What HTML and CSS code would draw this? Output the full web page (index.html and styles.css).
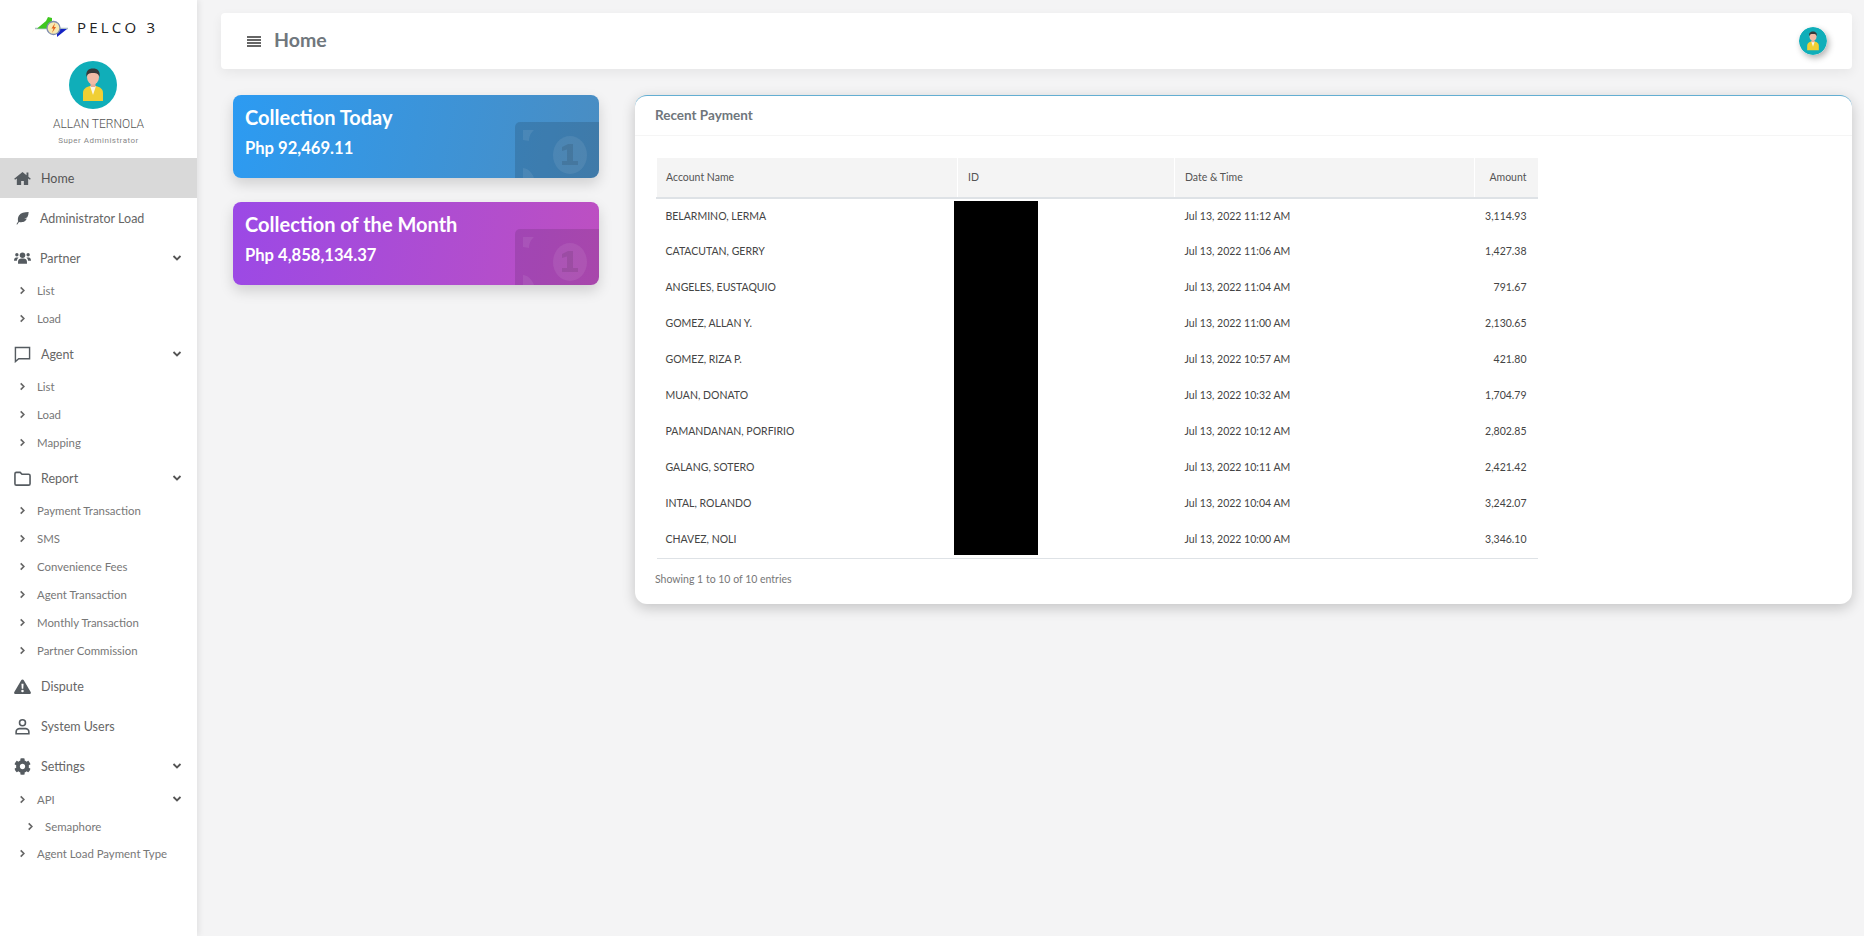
FILE: index.html
```html
<!DOCTYPE html>
<html lang="en">
<head>
  <meta charset="UTF-8">
  <meta name="viewport" content="width=device-width, initial-scale=1.0">
  <title>PELCO 3 - Home</title>
  <link rel="stylesheet" href="styles.css">
</head>
<body>
  <svg class="defs" aria-hidden="true">
    <symbol id="avatar" viewBox="0 0 48 48">
      <circle cx="24" cy="24" r="24" fill="#10aeb9"/>
      <path d="M14 40v-8c0-4 3-6 7-7h6c4 1 7 3 7 7v8z" fill="#f0cf34"/>
      <path d="M21 25l3 9 3-9z" fill="#fbf6e6"/>
      <rect x="21.5" y="20" width="5" height="6" fill="#e8ad97"/>
      <ellipse cx="24" cy="16" rx="6" ry="7.5" fill="#f2bba6"/>
      <path d="M17.5 16c-1-6 2-8.500 6.500-8.500s7.500 2.500 6.500 8.500c-1-3-2-4-6.500-4s-5.500 1-6.500 4z" fill="#37393a"/>
    </symbol>
    <symbol id="chevron-down" viewBox="0 0 10 10">
      <path d="M1.500 3l3.500 3.500L8.500 3" fill="none" stroke="currentColor" stroke-width="1.800"/>
    </symbol>
    <symbol id="chevron-right" viewBox="0 0 10 10">
      <path d="M3 1.500L6.500 5 3 8.500" fill="none" stroke="currentColor" stroke-width="1.800"/>
    </symbol>
  </svg>

  <div class="layout">
    <aside class="sidebar">
      <div class="brand">
        <svg class="brand-logo" viewBox="0 0 34 20">
          <path d="M0 11.500h33" stroke="#a9bcc4" stroke-width="1.500"/>
          <path d="M2 11.500L11 4l2-4 4 1v10.500z" fill="#3fc71f"/>
          <path d="M20 12h12L22 20v-3h-2z" fill="#1422c4"/>
          <circle cx="18.500" cy="11" r="6.500" fill="#f7e9b0" stroke="#7f8db0" stroke-width="1.300"/>
          <path d="M20 6l-3.500 5.500h2L17 16l4-6h-2z" fill="#e2631c"/>
        </svg>
        <span class="brand-name">PELCO 3</span>
      </div>
      <div class="profile">
        <svg class="profile-pic"><use href="#avatar"/></svg>
        <div class="profile-name">ALLAN TERNOLA</div>
        <div class="profile-role">Super Administrator</div>
      </div>

      <nav>
        <a class="nav-item active">
          <svg class="nav-icon" viewBox="0 0 576 512"><path d="M288 36L6 268l30 34 60-50v228h146V340h92v140h146V252l60 50 30-34-82-68V50h-64v96z"/></svg>
          Home
        </a>
        <a class="nav-item">
          <svg class="nav-icon small" viewBox="0 0 16 16"><path d="M15 1c-5 0-9 1-11 4-1.500 2-1.500 5-1 7L1 15l1 .5 2-3c2 .5 5 .5 7-1 1-1 1.500-2 2-3l-3 .5 3.500-2C14.500 5 15 3 15 1z"/></svg>
          Administrator Load
        </a>
        <a class="nav-item">
          <svg class="nav-icon small" viewBox="0 0 16 13"><circle cx="8" cy="4" r="2.600"/><circle cx="2.700" cy="3.500" r="1.600"/><circle cx="13.300" cy="3.500" r="1.600"/><path d="M3.800 12v-2c0-2 1.500-3 3-3h2.400c1.500 0 3 1 3 3v2zM0 9c0-2 1-3 2-3h1.500c.3 0 .6.100.8.300C3.400 7 2.800 8 2.700 9zM16 9c0-2-1-3-2-3h-1.500c-.3 0-.6.100-.8.300.9.700 1.500 1.700 1.600 2.700z"/></svg>
          Partner
          <svg class="nav-arrow"><use href="#chevron-down"/></svg>
        </a>
        <div class="submenu">
          <a class="sub-item"><svg class="sub-arrow"><use href="#chevron-right"/></svg>List</a>
          <a class="sub-item"><svg class="sub-arrow"><use href="#chevron-right"/></svg>Load</a>
        </div>
        <a class="nav-item">
          <svg class="nav-icon" viewBox="0 0 18 18"><path d="M1.500 1.500h15v12H5L1.500 16.500z" fill="none" stroke="currentColor" stroke-width="1.500"/></svg>
          Agent
          <svg class="nav-arrow"><use href="#chevron-down"/></svg>
        </a>
        <div class="submenu">
          <a class="sub-item"><svg class="sub-arrow"><use href="#chevron-right"/></svg>List</a>
          <a class="sub-item"><svg class="sub-arrow"><use href="#chevron-right"/></svg>Load</a>
          <a class="sub-item"><svg class="sub-arrow"><use href="#chevron-right"/></svg>Mapping</a>
        </div>
        <a class="nav-item">
          <svg class="nav-icon" viewBox="0 0 18 16"><path d="M1 3a1.500 1.500 0 0 1 1.500-1.500h4L8.500 3.500h7A1.500 1.500 0 0 1 17 5v8.500a1.500 1.500 0 0 1-1.500 1.500h-13A1.500 1.500 0 0 1 1 13.500z" fill="none" stroke="currentColor" stroke-width="1.700"/></svg>
          Report
          <svg class="nav-arrow"><use href="#chevron-down"/></svg>
        </a>
        <div class="submenu">
          <a class="sub-item"><svg class="sub-arrow"><use href="#chevron-right"/></svg>Payment Transaction</a>
          <a class="sub-item"><svg class="sub-arrow"><use href="#chevron-right"/></svg>SMS</a>
          <a class="sub-item"><svg class="sub-arrow"><use href="#chevron-right"/></svg>Convenience Fees</a>
          <a class="sub-item"><svg class="sub-arrow"><use href="#chevron-right"/></svg>Agent Transaction</a>
          <a class="sub-item"><svg class="sub-arrow"><use href="#chevron-right"/></svg>Monthly Transaction</a>
          <a class="sub-item"><svg class="sub-arrow"><use href="#chevron-right"/></svg>Partner Commission</a>
        </div>
        <a class="nav-item">
          <svg class="nav-icon" viewBox="0 0 16 14"><path fill-rule="evenodd" d="M8 .5c.5 0 1 .3 1.200.7l6.500 11c.5.8-.1 1.800-1.100 1.800H1.400c-1 0-1.600-1-1.100-1.800l6.500-11C7 .8 7.500.5 8 .5zM7 4.500l.3 4.500h1.400L9 4.500zM8 10a1.200 1.200 0 1 0 0 2.400A1.200 1.200 0 0 0 8 10z"/></svg>
          Dispute
        </a>
        <a class="nav-item">
          <svg class="nav-icon" viewBox="0 0 16 16"><circle cx="8" cy="4.500" r="2.800" fill="none" stroke="currentColor" stroke-width="1.500"/><path d="M2 14.800v-1.800c0-2 2-3 3-3h6c1 0 3 1 3 3v1.800z" fill="none" stroke="currentColor" stroke-width="1.500"/></svg>
          System Users
        </a>
        <a class="nav-item">
          <svg class="nav-icon" viewBox="0 0 512 512"><path d="M487.4 315.7l-42.6-24.6c4.300-23.200 4.300-47 0-70.200l42.6-24.600c4.900-2.800 7.100-8.600 5.500-14-11.100-35.600-30-67.800-54.700-94.600-3.800-4.100-10-5.100-14.800-2.300L380.800 110c-17.900-15.400-38.500-27.300-60.800-35.100V25.800c0-5.600-3.900-10.500-9.400-11.700-36.700-8.200-74.300-7.800-109.200 0-5.500 1.200-9.400 6.100-9.400 11.700V75c-22.200 7.900-42.800 19.800-60.800 35.100L88.700 85.500c-4.900-2.800-11-1.900-14.800 2.300-24.700 26.700-43.600 58.900-54.700 94.600-1.700 5.400.6 11.200 5.500 14L67.300 221c-4.300 23.200-4.300 47 0 70.200l-42.600 24.600c-4.900 2.800-7.100 8.600-5.500 14 11.100 35.600 30 67.800 54.700 94.600 3.800 4.100 10 5.100 14.800 2.300l42.600-24.600c17.900 15.400 38.500 27.300 60.800 35.100v49.200c0 5.600 3.900 10.500 9.400 11.700 36.700 8.200 74.300 7.800 109.200 0 5.500-1.200 9.400-6.100 9.400-11.700v-49.200c22.200-7.900 42.800-19.800 60.800-35.100l42.600 24.600c4.900 2.800 11 1.900 14.800-2.300 24.700-26.700 43.600-58.900 54.700-94.600 1.500-5.500-.7-11.300-5.600-14.100zM256 336c-44.100 0-80-35.900-80-80s35.900-80 80-80 80 35.900 80 80-35.900 80-80 80z"/></svg>
          Settings
          <svg class="nav-arrow"><use href="#chevron-down"/></svg>
        </a>
        <div class="submenu">
          <a class="sub-item sub-api"><svg class="sub-arrow"><use href="#chevron-right"/></svg>API<svg class="nav-arrow"><use href="#chevron-down"/></svg></a>
          <a class="sub-item sub-nested"><svg class="sub-arrow"><use href="#chevron-right"/></svg>Semaphore</a>
          <a class="sub-item"><svg class="sub-arrow"><use href="#chevron-right"/></svg>Agent Load Payment Type</a>
        </div>
      </nav>
    </aside>

    <main class="main">
      <header class="topbar">
        <div class="menu-toggle"><span></span><span></span><span></span><span></span></div>
        <h1 class="page-title">Home</h1>
        <svg class="topbar-user"><use href="#avatar"/></svg>
      </header>

      <div class="content">
        <div class="stats">
          <div class="stat-card blue">
            <div class="stat-title">Collection Today</div>
            <div class="stat-value">Php 92,469.11</div>
            <svg class="stat-bill" viewBox="0 0 84 56">
              <rect width="100" height="72" rx="5" fill="#000" fill-opacity=".13"/>
              <path d="M8 8h11c-2 2-5 5-5 11l-6-1zM8 46c4 0 9 4 11 10H8z" fill="#fff" fill-opacity=".08"/>
              <ellipse cx="55" cy="33" rx="17" ry="19" fill="#fff" fill-opacity=".08"/>
              <path d="M47 43h16v-4h-5V22h-5l-6 3v4l5-1.500V39h-5z" fill="#000" fill-opacity=".1"/>
            </svg>
          </div>
          <div class="stat-card purple">
            <div class="stat-title">Collection of the Month</div>
            <div class="stat-value">Php 4,858,134.37</div>
            <svg class="stat-bill" viewBox="0 0 84 56">
              <rect width="100" height="72" rx="5" fill="#000" fill-opacity=".11"/>
              <path d="M8 8h11c-2 2-5 5-5 11l-6-1zM8 46c4 0 9 4 11 10H8z" fill="#fff" fill-opacity=".08"/>
              <ellipse cx="55" cy="33" rx="17" ry="19" fill="#fff" fill-opacity=".08"/>
              <path d="M47 43h16v-4h-5V22h-5l-6 3v4l5-1.500V39h-5z" fill="#000" fill-opacity=".09"/>
            </svg>
          </div>
        </div>

        <section class="panel">
          <div class="panel-header">Recent Payment</div>
          <div class="panel-body">
            <div class="table-wrap">
              <table class="payments">
                <thead>
                  <tr>
                    <th class="col-name">Account Name</th>
                    <th class="col-id">ID</th>
                    <th class="col-date">Date &amp; Time</th>
                    <th class="col-amount">Amount</th>
                  </tr>
                </thead>
                <tbody>
                  <tr><td>BELARMINO, LERMA</td><td></td><td>Jul 13, 2022 11:12 AM</td><td class="num">3,114.93</td></tr>
                  <tr><td>CATACUTAN, GERRY</td><td></td><td>Jul 13, 2022 11:06 AM</td><td class="num">1,427.38</td></tr>
                  <tr><td>ANGELES, EUSTAQUIO</td><td></td><td>Jul 13, 2022 11:04 AM</td><td class="num">791.67</td></tr>
                  <tr><td>GOMEZ, ALLAN Y.</td><td></td><td>Jul 13, 2022 11:00 AM</td><td class="num">2,130.65</td></tr>
                  <tr><td>GOMEZ, RIZA P.</td><td></td><td>Jul 13, 2022 10:57 AM</td><td class="num">421.80</td></tr>
                  <tr><td>MUAN, DONATO</td><td></td><td>Jul 13, 2022 10:32 AM</td><td class="num">1,704.79</td></tr>
                  <tr><td>PAMANDANAN, PORFIRIO</td><td></td><td>Jul 13, 2022 10:12 AM</td><td class="num">2,802.85</td></tr>
                  <tr><td>GALANG, SOTERO</td><td></td><td>Jul 13, 2022 10:11 AM</td><td class="num">2,421.42</td></tr>
                  <tr><td>INTAL, ROLANDO</td><td></td><td>Jul 13, 2022 10:04 AM</td><td class="num">3,242.07</td></tr>
                  <tr><td>CHAVEZ, NOLI</td><td></td><td>Jul 13, 2022 10:00 AM</td><td class="num">3,346.10</td></tr>
                </tbody>
              </table>
              <div class="redaction"></div>
            </div>
            <div class="table-info">Showing 1 to 10 of 10 entries</div>
          </div>
        </section>
      </div>
    </main>
  </div>
</body>
</html>
```

FILE: styles.css
```css
* {
  box-sizing: border-box;
}

body {
  margin: 0;
  height: 936px;
  overflow: hidden;
  background-color: #f4f4f5;
  color: #555;
  font-family: Lato, "Noto Sans", sans-serif;
}

.defs {
  display: none;
}

.layout {
  display: flex;
  height: 100%;
}

/* sidebar */
.sidebar {
  flex: 0 0 197px;
  background-color: #fff;
  box-shadow: 2px 0 6px rgba(0, 0, 0, 0.08);
}

.brand {
  display: flex;
  align-items: center;
  height: 54px;
  padding: 0 0 0 35px;
}

.brand-logo {
  width: 34px;
  height: 20px;
  margin-right: 8px;
}

.brand-name {
  color: #222;
  font-family: "Open Sans", sans-serif;
  font-size: 15px;
  font-weight: 500;
  letter-spacing: 3.2px;
}

.profile {
  height: 104px;
  text-align: center;
}

.profile-pic {
  display: block;
  width: 48px;
  height: 48px;
  margin: 7px 0 0 69px;
}

.profile-name {
  margin-top: 8px;
  color: #555;
  font-family: Roboto, sans-serif;
  font-size: 12px;
  font-weight: 300;
}

.profile-role {
  margin-top: 5px;
  color: #888;
  font-family: Roboto, sans-serif;
  font-size: 8px;
  letter-spacing: 0.5px;
}

nav {
  margin-top: -7px;
}

.nav-item {
  display: flex;
  align-items: center;
  height: 40px;
  padding: 0 14px;
  color: #666;
  font-size: 12.5px;
}

.nav-item.active {
  background-color: #d9d9d9;
  color: #555;
}

.nav-icon {
  flex: 0 0 17px;
  width: 17px;
  height: 17px;
  margin-right: 10px;
  fill: #555b60;
  color: #555b60;
}

.nav-icon.small {
  height: 14px;
  margin-right: 9px;
}

.nav-arrow {
  width: 10px;
  height: 10px;
  margin-left: auto;
  margin-right: 1px;
  color: #555;
}

.submenu {
  margin: -2px 0 2px 0;
}

.sub-item {
  display: flex;
  align-items: center;
  height: 28px;
  padding: 0 14px 0 18px;
  color: #777;
  font-size: 11.4px;
}

.sub-arrow {
  width: 9px;
  height: 9px;
  margin-right: 10px;
  color: #666;
}

.sub-api {
  height: 30px;
}

.sub-nested {
  height: 25px;
  padding-left: 26px;
}

/* main */
.main {
  flex: 1;
  padding: 13px 12px 0 24px;
}

.topbar {
  display: flex;
  align-items: center;
  height: 56px;
  padding: 0 25px 0 26px;
  background-color: #fff;
  border-radius: 4px;
  box-shadow: 0 4px 12px rgba(0, 0, 0, 0.06);
}

.menu-toggle {
  display: flex;
  flex-direction: column;
  gap: 1.6px;
  margin-right: 13px;
  padding-top: 1px;
}

.menu-toggle span {
  display: block;
  width: 14px;
  height: 1.5px;
  background-color: #666;
}

.page-title {
  margin: 0 0 4px 0;
  color: #70777d;
  font-size: 19.5px;
  font-weight: 700;
}

.topbar-user {
  width: 28px;
  height: 28px;
  margin-left: auto;
  border-radius: 50%;
  box-shadow: 2px 3px 6px rgba(0, 0, 0, 0.3);
}

.content {
  display: grid;
  grid-template-columns: 366px 1fr;
  gap: 36px;
  align-items: start;
  padding: 26px 0 0 12px;
}

/* stat cards */
.stats {
  display: flex;
  flex-direction: column;
  gap: 24px;
}

.stat-card {
  position: relative;
  height: 83px;
  padding: 9px 12px 0 12px;
  overflow: hidden;
  border-radius: 8px;
  color: #fff;
  box-shadow: 0 6px 14px rgba(0, 0, 0, 0.15);
}

.stat-card.blue {
  background: linear-gradient(100deg, #2c9bf2, #4a8dc2);
}

.stat-card.purple {
  background: linear-gradient(100deg, #9b49e6, #bd50c1);
}

.stat-title {
  font-size: 20px;
  font-weight: 700;
  line-height: 27px;
}

.stat-value {
  margin-top: 6px;
  font-size: 16.6px;
  font-weight: 700;
  line-height: 22px;
}

.stat-bill {
  position: absolute;
  right: 0;
  bottom: 0;
  width: 84px;
  height: 56px;
}

/* table panel */
.panel {
  height: 509px;
  background-color: #fff;
  border-top: 1px solid #63aed2;
  border-radius: 12px;
  box-shadow: 0 4px 14px rgba(0, 0, 0, 0.2);
}

.panel-header {
  height: 40px;
  padding: 11px 20px 0 20px;
  border-bottom: 1px solid #f5f5f5;
  color: #6f767c;
  font-size: 13.5px;
  font-weight: 700;
}

.panel-body {
  padding: 22px 21px 0 21px;
}

.table-wrap {
  position: relative;
  width: 881px;
}

.payments {
  width: 881px;
  table-layout: fixed;
  border-collapse: collapse;
  border-bottom: 1px solid #dee2e6;
  font-size: 10.5px;
}

.payments th {
  height: 40px;
  padding: 0 10px 1px 10px;
  background-color: #f4f4f4;
  border-left: 1px solid #fff;
  border-bottom: 2px solid #dee2e6;
  color: #555;
  font-weight: 400;
  text-align: left;
}

.payments td {
  height: 36px;
  padding: 0 10px 2px 10px;
  color: #444;
  white-space: nowrap;
}

.payments th:first-child,
.payments td:first-child {
  padding-left: 9px;
}

.payments th:last-child,
.payments td:last-child {
  padding-right: 11px;
}

.col-name {
  width: 301px;
}

.col-id {
  width: 217px;
}

.col-date {
  width: 300px;
}

.col-amount {
  width: 63px;
}

.payments th.col-amount,
.payments td.num {
  text-align: right;
}

.redaction {
  position: absolute;
  top: 43px;
  left: 298px;
  width: 84px;
  height: 354px;
  background-color: #000;
}

.table-info {
  margin-top: 14px;
  margin-left: -1px;
  color: #777;
  font-size: 10.5px;
}
```
